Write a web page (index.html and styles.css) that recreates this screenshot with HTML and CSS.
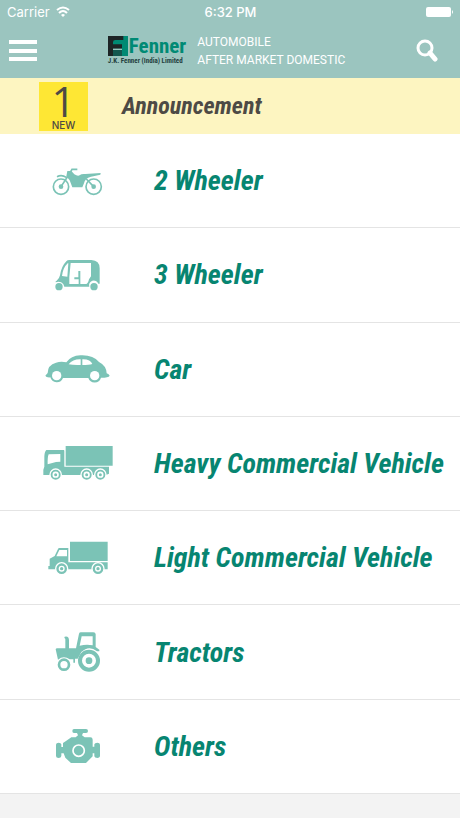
FILE: index.html
```html
<!DOCTYPE html>
<html lang="en">
<head>
    <meta charset="utf-8">
    <meta name="viewport" content="width=device-width, initial-scale=1">
    <title>Fenner Automobile</title>
    <link rel="stylesheet" href="styles.css">
</head>
<body>
<header class="top">
    <div class="status">
        <div class="carrier">
            <span>Carrier</span>
            <svg width="14" height="12" viewBox="0 0 14 12" fill="none" stroke="#fff" stroke-width="2">
                <path d="M1 4Q7-1 13 4M3 7Q7 3 11 7"/>
                <path d="M5 9Q7 7 9 9L7 11Z" fill="#fff" stroke="none"/>
            </svg>
        </div>
        <time class="clock">6:32 PM</time>
        <div class="battery">
            <svg width="28" height="12" viewBox="0 0 28 12" fill="#fff">
                <rect x="0" y="1" width="25" height="10" rx="2"/>
                <path d="M26 4Q28 6 26 8Z"/>
            </svg>
        </div>
    </div>
    <div class="bar">
        <button class="icon-button" aria-label="Menu">
            <svg width="28" height="22" viewBox="0 0 28 22" fill="#fff">
                <path d="M0 0h28v4H0zM0 9h28v4H0zM0 17h28v4H0z"/>
            </svg>
        </button>
        <div class="brand">
            <div class="logo">
                <div class="logo-name">
                    <svg width="20" height="20" viewBox="0 0 60 60">
                        <path d="M0 0H60V60H0Z" fill="#008a74"/>
                        <path d="M0 0H46V12H22Q15 12 15 19V25H42V38H15V60H0Z" fill="#1d2526"/>
                        <path d="M15 38H42V42H15Z" fill="#9bc5bf"/>
                        <path d="M15 42H42V60H15Z" fill="#12574f"/>
                    </svg>
                    <strong>Fenner</strong>
                </div>
                <small>J.K. Fenner (India) Limited</small>
            </div>
            <p class="division">AUTOMOBILE<br>AFTER MARKET DOMESTIC</p>
        </div>
        <button class="icon-button" aria-label="Search">
            <svg width="22" height="24" viewBox="0 0 22 24" fill="none" stroke="#fff">
                <circle cx="9" cy="9" r="7" stroke-width="3"/>
                <path d="M14 14L19 20" stroke-width="5" stroke-linecap="round"/>
            </svg>
        </button>
    </div>
</header>

<a class="announcement" href="#announcement">
    <span class="badge"><span class="count">1</span><span class="new">NEW</span></span>
    <span>Announcement</span>
</a>

<nav class="menu">
    <a href="#two-wheeler">
        <svg viewBox="0 0 300 180">
            <g fill="none" stroke="#7bc3b6" stroke-width="5">
                <circle cx="93" cy="107" r="23"/>
                <circle cx="191" cy="107" r="23"/>
                <path d="M93 107L118 69L126 55H142M81 77Q95 70 109 79M169 84L191 107"/>
            </g>
            <circle cx="93" cy="107" r="7"/>
            <circle cx="191" cy="107" r="7"/>
            <path d="M112 60H124L133 70Q144 77 150 72Q154 68 166 69L212 66L211 71L183 77Q164 82 162 97L157 109H127L119 88L109 76Z"/>
        </svg>
        <span>2 Wheeler</span>
    </a>
    <a href="#three-wheeler">
        <svg viewBox="0 0 300 180">
            <path fill-rule="evenodd" d="M118 45H184Q209 46 209 70V116H205A14 14 0 0 0 178 125H103A18 18 0 0 0 77 112Q75 109 80 107Q88 101 90 91Q94 64 109 49Q112 45 118 45ZM113 55Q99 68 96 93L112 95L115 55ZM122 54L118 96V117H146V103H133V97H145V78H151V117H169Q174 116 177 103L183 94V54Z"/>
            <circle cx="87" cy="125" r="11"/>
            <circle cx="192" cy="125" r="11"/>
        </svg>
        <span>3 Wheeler</span>
    </a>
    <a href="#car">
        <svg viewBox="0 -2 300 180">
            <path fill-rule="evenodd" d="M46 108Q50 104 53 100Q53 76 78 69Q93 64 109 68Q123 48 151 47Q189 45 207 67Q229 78 230 101Q237 103 239 108Q236 114 213 114A20 20 0 0 1 175 115H99A20 20 0 0 1 61 113Q48 114 46 108ZM116 74Q130 77 152 76V59Q129 58 116 74ZM157 59V76Q177 76 187 73Q181 58 157 59Z"/>
            <circle cx="80" cy="108" r="14" fill="#fff"/>
            <circle cx="194" cy="108" r="14" fill="#fff"/>
        </svg>
        <span>Car</span>
    </a>
    <a href="#heavy">
        <svg viewBox="0 -3 300 180">
            <path d="M107 36H248V95H107Z"/>
            <path fill-rule="evenodd" d="M49 48H101Q103 48 103 51V98H237V119L228 123H40V107L43 98V67Q44 52 49 48ZM56 61Q52 71 53 91L78 84L91 83V60Z"/>
            <g stroke="#fff" stroke-width="4">
                <circle cx="77" cy="122" r="17"/>
                <circle cx="170" cy="122" r="17"/>
                <circle cx="211" cy="122" r="17"/>
            </g>
            <g fill="none" stroke="#fff" stroke-width="5">
                <circle cx="77" cy="122" r="7"/>
                <circle cx="170" cy="122" r="7"/>
                <circle cx="211" cy="122" r="7"/>
            </g>
        </svg>
        <span>Heavy Commercial Vehicle</span>
    </a>
    <a href="#light">
        <svg viewBox="0 -5 300 180">
            <path d="M120 36H233V94H120Z"/>
            <path fill-rule="evenodd" d="M88 55H115V98H233V119H55V109H59V87L74 79L84 58Q85 55 88 55ZM88 61L79 80H111V61Z"/>
            <g stroke="#fff" stroke-width="4">
                <circle cx="95" cy="117" r="18"/>
                <circle cx="204" cy="117" r="18"/>
            </g>
            <g fill="none" stroke="#fff" stroke-width="4">
                <circle cx="95" cy="117" r="7"/>
                <circle cx="204" cy="117" r="7"/>
            </g>
        </svg>
        <span>Light Commercial Vehicle</span>
    </a>
    <a href="#tractors">
        <svg viewBox="0 8 300 180">
            <path fill-rule="evenodd" d="M104 52Q117 49 117 63V87H138L147 43Q148 39 153 39H190Q197 39 197 45V83L208 91V96H201Q177 76 154 98L143 118H135V130H130V120H119Q101 107 84 121L77 90Q77 87 82 87H106V60Q106 57 103 56ZM155 51L149 79Q170 74 188 78V51Z"/>
            <g fill="none" stroke="#7bc3b6">
                <circle cx="102" cy="136" r="15" stroke-width="8"/>
                <circle cx="177" cy="124" r="27" stroke-width="12"/>
            </g>
            <circle cx="177" cy="124" r="10"/>
        </svg>
        <span>Tractors</span>
    </a>
    <a href="#others">
        <svg viewBox="0 6 300 180">
            <path d="M132 45H168Q174 45 174 51Q174 57 168 57H159L156 64L164 70H181Q188 70 188 77V98H193V91Q194 86 202 86Q210 86 210 92V127Q209 132 202 132Q194 132 193 127V118H188V127L168 147H123L106 131L101 118H94V126Q93 132 86 132Q78 132 78 126V92Q78 86 86 86Q93 86 94 91V99H99V87L108 81L124 70H137L144 64L141 57H132Q127 57 127 51Q127 45 132 45Z"/>
            <circle cx="146" cy="110" r="17" fill="none" stroke="#fff" stroke-width="5"/>
        </svg>
        <span>Others</span>
    </a>
</nav>
</body>
</html>
```
FILE: styles.css
```css
* {
    box-sizing: border-box;
}

body {
    margin: 0;
    min-height: 100vh;
    display: flex;
    flex-direction: column;
    padding-bottom: 24px;
    background-color: #f3f3f3;
    font-family: Roboto, "Liberation Sans", sans-serif;
}

a {
    color: inherit;
    text-decoration: none;
}

svg {
    display: block;
}

.top {
    background-color: #9bc5bf;
    color: #fff;
}

.status {
    display: grid;
    grid-template-columns: 1fr auto 1fr;
    align-items: center;
    height: 24px;
    padding: 0 6px 0 7px;
    font: 13px Inter, sans-serif;
}

.carrier {
    display: flex;
    align-items: center;
    gap: 6px;
}

.clock {
    font-weight: 500;
}

.battery {
    justify-self: end;
}

.bar {
    display: flex;
    align-items: center;
    justify-content: space-between;
    height: 54px;
    padding: 0 22px 0 9px;
}

.icon-button {
    padding: 0;
    border: none;
    background: none;
    cursor: pointer;
}

.brand {
    display: flex;
    align-items: center;
    gap: 11px;
}

.logo-name {
    display: flex;
    gap: 1px;
    height: 20px;
}

.logo strong {
    color: #008a74;
    font: bold 21px/20px "Roboto Condensed", "Liberation Sans Narrow", sans-serif;
}

.logo small {
    display: block;
    color: #24413e;
    font: bold 7px/10px "Roboto Condensed", "Liberation Sans Narrow", sans-serif;
}

.division {
    margin: 0;
    font-size: 12px;
    line-height: 18px;
}

.announcement {
    display: flex;
    align-items: center;
    height: 56px;
    padding-left: 39px;
    gap: 34px;
    background-color: #fdf5c1;
    color: #4d4a45;
    font: italic bold 24px "Roboto Condensed", "Liberation Sans Narrow", sans-serif;
}

.badge {
    display: flex;
    flex-direction: column;
    align-items: center;
    width: 49px;
    height: 49px;
    background-color: #fee734;
    font: 10px Inter, sans-serif;
}

.count {
    font-family: "Open Sans", sans-serif;
    font-size: 42px;
    line-height: 38px;
}

.new {
    font-weight: 500;
    line-height: 10px;
}

.menu {
    flex: 1;
    display: flex;
    flex-direction: column;
}

.menu a {
    flex: 1;
    display: flex;
    align-items: center;
    gap: 24px;
    min-height: 80px;
    padding-left: 30px;
    border-bottom: 1px solid #e4e4e4;
    background-color: #fff;
    color: #078571;
    font: italic bold 28px "Roboto Condensed", "Liberation Sans Narrow", sans-serif;
}

.menu svg {
    flex: none;
    width: 100px;
    height: 60px;
    fill: #7bc3b6;
}
```
